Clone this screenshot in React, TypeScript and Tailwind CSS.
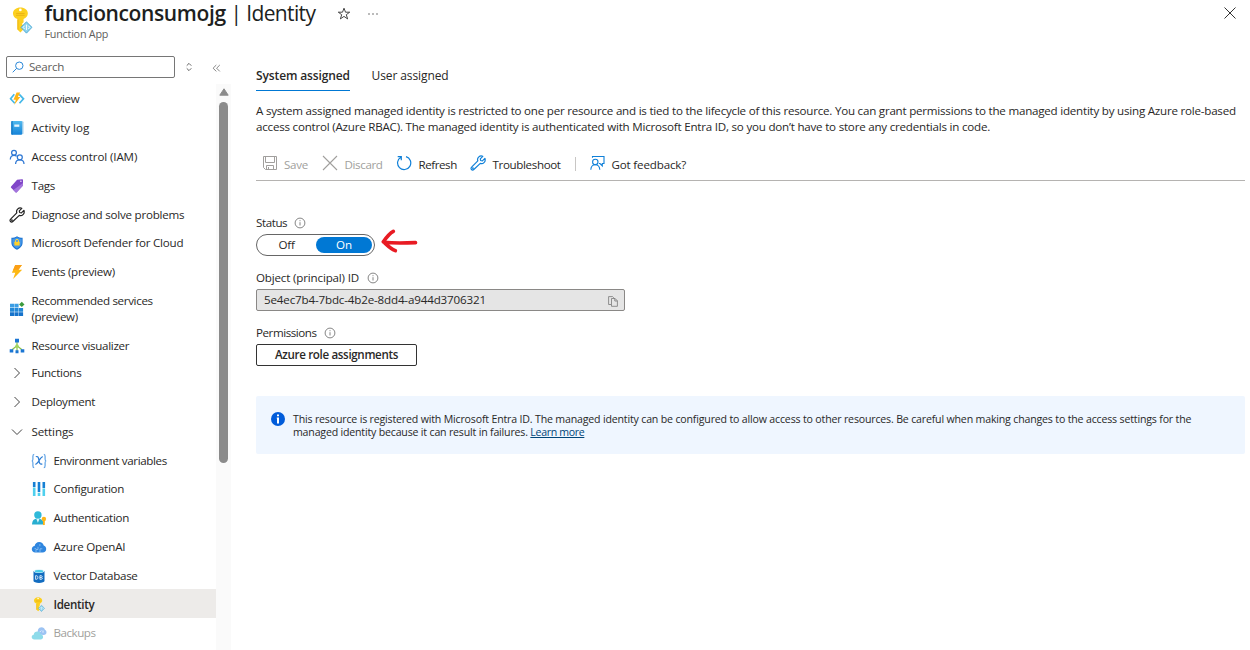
import React from "react";

type SvgProps = { className?: string };

const KeyIcon = ({ className = "" }: SvgProps) => (
  <svg viewBox="0 0 20 26" className={className} fill="none">
    <path d="M8.500.5C4.400.5 1.300 2.900 1.300 6.200c0 2.500 1.700 4.500 4.300 5.400v10l2.900 2.900 3-3-1.600-1.700 1.700-1.700-1.700-1.800 1.600-1.600v-3.200c2.500-.9 4.100-2.900 4.100-5.300C15.600 2.900 12.600.5 8.500.5Z" fill="#fcd020" />
    <path d="M5.600 12h1v10.500l-1-1Z" fill="#efb713" />
    <circle cx="8.400" cy="2.800" r="1.300" fill="#fff" />
    <path d="M4.300 6.200h8.200M4.300 8h8.200" stroke="#eab114" strokeWidth=".9" />
    <path d="m14.300 14.300 5.300 5.300-5.300 5.600L9 19.600Z" fill="#8fd3ee" stroke="#3ea2d0" strokeWidth=".8" />
    <path d="M14.300 17v5.200m-1.800-4.200-1.500 1.600 1.500 1.600m3.600-3.200 1.500 1.600-1.500 1.600" stroke="#fff" strokeWidth=".9" />
  </svg>
);

const OverviewIcon = () => (
  <svg viewBox="0 0 16 16" className="size-4" fill="none">
    <path d="M5.300 3.300 1.600 7.800l4.100 4.500M10.300 3.300l4.200 4.500-4 4.500" stroke="#44b8e8" strokeWidth="1.700" />
    <path d="M7.600 1.500h3.600L8.900 6h2.400l-6.100 8 1.700-5.300H4.400Z" fill="#fdb515" />
  </svg>
);

const LogIcon = () => (
  <svg viewBox="0 0 16 16" className="size-4" fill="none">
    <defs>
      <linearGradient id="log" x1="0" y1="0" x2="0" y2="1"><stop stopColor="#50b9ee" /><stop offset="1" stopColor="#1683d8" /></linearGradient>
    </defs>
    <rect x="3" y="1.200" width="11.500" height="13" rx="1" fill="#a5cfea" />
    <rect x="2.300" y="1" width="10.800" height="13.700" rx="1" fill="url(#log)" />
    <path d="M2.300 1.800a.8.800 0 0 1 .8-.8h.5v13.700h-.5a.8.800 0 0 1-.8-.8Z" fill="#1277c5" />
    <rect x="5.300" y="4.500" width="5" height="2.300" fill="#e8f5fd" />
  </svg>
);

const PeopleIcon = () => (
  <svg viewBox="0 0 16 16" className="size-4" fill="none" stroke="#2f78d4" strokeWidth="1.250">
    <circle cx="5" cy="3.800" r="2.400" />
    <path d="M1.300 10.500c0-2.600 1.500-4.200 3.700-4.200 1.100 0 2 .4 2.700 1" />
    <circle cx="10.800" cy="8.300" r="2.500" />
    <path d="M6.600 14.900c0-2.500 1.700-4.100 4.200-4.100s4.200 1.600 4.200 4.100" />
  </svg>
);

const TagIcon = () => (
  <svg viewBox="0 0 16 16" className="size-4">
    <path d="M8.100 1.800 13 1.300c.6 0 1 .4 1 1v4.600c0 .4-.1.700-.4 1l-5.800 6.300c-.4.400-.9.400-1.300 0L2.100 9.700c-.4-.4-.4-.9 0-1.300Z" fill="#8046c8" />
    <path d="M14 5v1.900c0 .4-.1.700-.4 1l-5.800 6.300c-.4.400-.9.400-1.300 0L4.300 11.900Z" fill="#a374dc" />
    <circle cx="11.900" cy="3.300" r=".8" fill="#ead8fa" />
  </svg>
);

const Wrench = ({ className = "" }: SvgProps) => (
  <svg viewBox="0 0 16 16" className={className} fill="none" stroke="currentColor" strokeWidth="1.200" strokeLinejoin="round">
    <path d="M12.800 1.300 10.300 3.800l.3 1.700 1.800.3 2.500-2.500c.6 1.700.2 3.300-.9 4.300-1 1-2.400 1.200-3.700.8l-6.500 6.100c-.7.700-1.700.7-2.300 0-.7-.7-.6-1.700.1-2.300l6.200-6.400C7.300 4.500 7.600 3.200 8.600 2.200c1.100-1.100 2.700-1.500 4.200-.9Z" />
    <circle cx="2.900" cy="13.300" r=".35" />
  </svg>
);

const ShieldIcon = () => (
  <svg viewBox="0 0 16 16" className="size-4">
    <path d="M8 1.200c1.700 1.300 3.500 1.500 5.600 1.600v4.600c0 3.500-2.500 5.600-5.600 7.300-3.100-1.700-5.600-3.800-5.600-7.300V2.800C4.500 2.700 6.300 2.500 8 1.200Z" fill="#1b73d0" />
    <path d="M8 2.300c1.500 1.100 3 1.400 4.700 1.500v3.700c0 2.800-2 4.600-4.700 6-2.700-1.400-4.700-3.200-4.700-6V3.800C5 3.700 6.500 3.400 8 2.300Z" fill="#4597e8" />
    <path d="M6.500 7V5.900a1.500 1.500 0 0 1 3 0V7" stroke="#ffd83d" strokeWidth="1" fill="none" />
    <rect x="5.400" y="6.700" width="5.200" height="3.900" rx=".5" fill="#ffd029" />
  </svg>
);

const BoltIcon = () => (
  <svg viewBox="0 0 16 16" className="size-4">
    <path d="M6.200 1h6.700L9.500 5.800h3.700L4.100 15l2.200-6.300H2.900Z" fill="#fdb813" />
    <path d="M6.200 1h6.700L9.500 5.800H6.300L4 6.500Z" fill="#fb9f16" />
  </svg>
);

const GridIcon = () => (
  <svg viewBox="0 0 16 16" className="size-4">
    <path fill="#3a9de4" d="M1 2.800h4.100v3.800H1zM5.500 2.800h4.100v3.800H5.500z" />
    <path fill="#2288d8" d="M1 7h4.100v3.800H1zM5.500 7h4.100v3.800H5.500zM10 7h4.100v3.800H10z" />
    <path fill="#1673cb" d="M1 11.200h4.100V15H1zM5.500 11.200h4.100V15H5.500zM10 11.200h4.100V15H10z" />
    <path d="m12.800.8 2.700 2.600-2.700 2.700-2.700-2.700Z" fill="#3c9b3d" />
  </svg>
);

const TreeIcon = () => (
  <svg viewBox="0 0 16 16" className="size-4" fill="none">
    <path d="M8 4v9M8 7.800l-5 4M8 7.800l5 4" stroke="#8bc34a" strokeWidth="1.200" />
    <circle cx="8" cy="8" r="1.700" fill="#a3d65c" />
    <path d="M6 .8h4v3.800H6zM.7 11.200h3.600v3.300H.7zM11.700 11.200h3.600v3.300h-3.600zM6.500 12.300h3v3h-3z" fill="#1b76d3" />
  </svg>
);

const Chevron = ({ open = false }: { open?: boolean }) => (
  <svg viewBox="0 0 16 16" className="size-4" fill="none" stroke="#444" strokeWidth="1">
    <path d={open ? "m3 5.500 5 5 5-5" : "m5.500 3 5 5-5 5"} />
  </svg>
);

const VarIcon = () => (
  <svg viewBox="0 0 16 16" className="size-4" fill="none" stroke="#2b7cd3">
    <path stroke="#5fa3e6" strokeWidth="1.200" d="M3.200 1.300c-1.300 0-1.300.6-1.300 2v3c0 1-.3 1.600-1.100 1.700.8.100 1.100.7 1.100 1.700v3c0 1.400 0 2 1.300 2M12.800 1.300c1.300 0 1.300.6 1.300 2v3c0 1 .3 1.600 1.100 1.700-.8.100-1.100.7-1.100 1.700v3c0 1.400 0 2-1.300 2" />
    <path strokeWidth="1.200" d="M4.800 3.800c2.200-1 2.700.6 3.100 3.600.4 2.900 1.400 4.700 3.400 3.400M11.800 3.900C9.500 3 6.800 12 4.300 11" />
  </svg>
);

const ConfigIcon = () => (
  <svg viewBox="0 0 16 16" className="size-4">
    <path fill="#1680d4" d="M1.900 1h2.600v5H1.900zM6.700 1h2.600v10H6.700zM11.500 1h2.600v6h-2.600z" />
    <path fill="#4fd0ee" d="M1.900 6.500h2.600V15H1.900zM6.700 11.700h2.600V15H6.700zM11.500 7.500h2.600V15h-2.600z" />
  </svg>
);

const UserIcon = () => (
  <svg viewBox="0 0 16 16" className="size-4">
    <path d="M1 14.500c.2-3.700 1.700-6 5.800-6s5.600 2.300 5.900 6Z" fill="#28aed0" />
    <circle cx="6.900" cy="5" r="3.700" fill="#2fb9d9" />
    <path d="m5.300 8.700 1.600 4 1.600-4Z" fill="#d9f5fb" />
    <circle cx="12.900" cy="9" r="2.200" fill="#fdb515" />
    <path d="M12 10h1.800v4.300l-.9.900-.9-.9Z" fill="#fdb515" />
  </svg>
);

const CloudIcon = () => (
  <svg viewBox="0 0 16 16" className="size-4" fill="none">
    <path d="M4.200 13.500C2.200 13.500.8 12.200.8 10.300c0-1.700 1.200-3 2.800-3.200C3.900 4.700 5.800 3 8.200 3c2.300 0 4 1.400 4.500 3.500 1.500.3 2.500 1.700 2.500 3.400 0 2.100-1.500 3.600-3.500 3.600Z" fill="#2f86df" />
    <path d="M5 13v-2.500h2V7.800M9 13V9.800h2.300M8.900 7.200V5M3.500 9.700h1.700" stroke="#9dccf7" strokeWidth=".7" />
  </svg>
);

const DbIcon = () => (
  <svg viewBox="0 0 16 16" className="size-4">
    <path d="M2.500 3v10c0 1 2.500 1.900 5.500 1.900s5.500-.9 5.500-1.900V3Z" fill="#126cc0" />
    <ellipse cx="8" cy="3.100" rx="5.500" ry="2" fill="#e6f6fb" />
    <ellipse cx="8" cy="3.200" rx="4.300" ry="1.300" fill="#45cbe8" />
    <path d="M4.600 7.700v3.600h.6c1.100 0 1.700-.6 1.700-1.800s-.6-1.800-1.700-1.800ZM8.900 7.700v3.600h1.300c1.300 0 1.500-1.500.4-1.800.9-.4.700-1.800-.4-1.800ZM8.900 9.500h1.600" fill="none" stroke="#fff" strokeWidth=".8" />
  </svg>
);

const BackupIcon = () => (
  <svg viewBox="0 0 16 16" className="size-4">
    <path d="M7.300 9.500C5.800 5.300 7.500 2.200 10.500 2.200c1.900 0 3 1 3.400 2.600 1 .4 1.600 1.300 1.600 2.500 0 1.700-1.200 2.800-2.900 2.800Z" fill="#9cc3f3" />
    <path d="M8.500 7.300 10.300 5.500m1.700 0v2.200" stroke="#e3effd" strokeWidth="1" />
    <path d="M3.300 14.400c-1.500 0-2.600-1-2.600-2.400 0-1.200.8-2.100 2-2.300.3-2 1.700-3.200 3.600-3.200s3.200 1.100 3.600 2.900c1.300.1 2.200 1.100 2.200 2.500s-1 2.500-2.500 2.500Z" fill="#8edbea" />
  </svg>
);

const InfoIcon = () => (
  <svg viewBox="0 0 12 12" className="size-3 shrink-0" fill="none" stroke="#666" strokeWidth=".8">
    <circle cx="6" cy="6" r="4.900" />
    <path d="M6 5.200v3.300M6 3.200v1" />
  </svg>
);

type Item = { label: React.ReactNode; icon: React.ReactNode; row: string; text?: string };

const items: Item[] = [
  { label: "Overview", icon: <OverviewIcon />, row: "h-[29px]", text: "tracking-[-0.28px]" },
  { label: "Activity log", icon: <LogIcon />, row: "h-[29px]", text: "tracking-[0px]" },
  { label: "Access control (IAM)", icon: <PeopleIcon />, row: "h-[29px]", text: "tracking-[-0.13px]" },
  { label: "Tags", icon: <TagIcon />, row: "h-[29px]", text: "tracking-[-0.25px]" },
  { label: "Diagnose and solve problems", icon: <Wrench className="size-4 text-[#222]" />, row: "h-[29px]", text: "tracking-[-0.24px]" },
  { label: "Microsoft Defender for Cloud", icon: <ShieldIcon />, row: "h-[28px]", text: "tracking-[-0.22px]" },
  { label: "Events (preview)", icon: <BoltIcon />, row: "h-[29px]", text: "tracking-[-0.29px]" },
  { label: <>Recommended services<br />(preview)</>, icon: <GridIcon />, row: "h-[45px]", text: "tracking-[-0.34px]" },
  { label: "Resource visualizer", icon: <TreeIcon />, row: "h-[29px]", text: "tracking-[-0.3px]" },
  { label: "Functions", icon: <Chevron />, row: "h-[26px]", text: "tracking-[-0.28px]" },
  { label: "Deployment", icon: <Chevron />, row: "h-[31px]", text: "tracking-[-0.26px]" },
  { label: "Settings", icon: <Chevron open />, row: "h-[29px]", text: "tracking-[-0.13px]" },
];

const children: Item[] = [
  { label: "Environment variables", icon: <VarIcon />, row: "h-[29px]", text: "tracking-[-0.36px]" },
  { label: "Configuration", icon: <ConfigIcon />, row: "h-[28px]", text: "tracking-[-0.25px]" },
  { label: "Authentication", icon: <UserIcon />, row: "h-[29px]", text: "tracking-[-0.28px]" },
  { label: "Azure OpenAI", icon: <CloudIcon />, row: "h-[30px]", text: "tracking-[-0.22px]" },
  { label: "Vector Database", icon: <DbIcon />, row: "h-[27px]", text: "tracking-[-0.32px]" },
  { label: "Identity", icon: <KeyIcon className="h-[15px] w-4" />, row: "h-[29px] bg-[#edebe9] pt-[2px]", text: "font-semibold tracking-[-0.32px]" },
  { label: "Backups", icon: <BackupIcon />, row: "h-[30px]", text: "tracking-[-0.48px] text-[#a19f9d]" },
];

const NavRow = ({ item, indent }: { item: Item; indent: string }) => (
  <div className={`flex w-[216px] shrink-0 items-center ${indent} ${item.row}`}>
    <span className="mr-[6.500px] flex w-4 shrink-0 justify-center">{item.icon}</span>
    <span className={`whitespace-nowrap leading-4 ${item.text}`}>{item.label}</span>
  </div>
);

const Header = () => (
  <header className="flex h-[46px] shrink-0 pl-[11px] pr-[13px]">
    <KeyIcon className="mt-[7px] h-[27px] w-[22px] shrink-0" />
    <div className="ml-[11.500px]">
      <div className="flex h-[26px] items-center">
        <h1 className="whitespace-nowrap text-[21px] leading-[26px] text-[#201f1e]">
          <span className="font-semibold tracking-[-0.38px]">funcionconsumojg</span>
          <span className="tracking-[-0.63px]"> | Identity</span>
        </h1>
        <svg viewBox="0 0 14 14" className="ml-[22px] mt-0.5 size-[14px]" fill="none" stroke="#333" strokeWidth=".9">
          <path d="m7 1.200 1.500 4h4.200L9.300 7.700l1.300 4.200L7 9.400l-3.600 2.500 1.300-4.200L1.300 5.200h4.200Z" />
        </svg>
        <svg viewBox="0 0 12 4" className="ml-4 mt-px h-1 w-3" fill="#444">
          <circle cx="2" cy="2" r=".7" /><circle cx="6" cy="2" r=".7" /><circle cx="10" cy="2" r=".7" />
        </svg>
      </div>
      <p className="mt-px text-[10.800px] leading-[14px] tracking-[-0.24px] text-[#605e5c]">Function App</p>
    </div>
    <svg viewBox="0 0 14 14" className="ml-auto mt-[6px] size-[14px]" fill="none" stroke="#333" strokeWidth="1">
      <path d="m1.500 1.500 11 11m0-11-11 11" />
    </svg>
  </header>
);

const Sidebar = () => (
  <aside className="flex w-[231px] shrink-0 flex-col">
    <div className="flex h-[38px] shrink-0 items-start pl-1.5 pt-[10px]">
      <div className="flex h-[22px] w-[169px] items-center rounded-[2px] border border-[#767676] pl-[5px]">
        <svg viewBox="0 0 12 12" className="size-3" fill="none" stroke="#2b88d8" strokeWidth="1">
          <circle cx="7.300" cy="4.700" r="3.700" /><path d="M4.600 7.400.7 11.300" />
        </svg>
        <span className="ml-[5px] tracking-[-0.28px] text-[#605e5c]">Search</span>
      </div>
      <svg viewBox="0 0 8 10" className="ml-[10px] mt-[6px] h-[10px] w-2" fill="none" stroke="#555" strokeWidth=".9">
        <path d="m1.700 3.700 2.300-2.300 2.300 2.300M1.700 6.300 4 8.600l2.300-2.300" />
      </svg>
      <svg viewBox="0 0 10 10" className="ml-[18px] mt-[7px] size-[10px]" fill="none" stroke="#666" strokeWidth=".8">
        <path d="M5.300 2 2.100 5.200 5.300 8.400M8.800 2 5.600 5.200 8.800 8.400" />
      </svg>
    </div>
    <div className="flex min-h-0 flex-1">
      <nav className="flex w-[216px] shrink-0 flex-col">
        {items.map((it, i) => <NavRow key={i} item={it} indent="pl-[9px]" />)}
        {children.map((it, i) => <NavRow key={i} item={it} indent="pl-[31px]" />)}
      </nav>
      <div className="flex w-[15px] flex-col items-center bg-[#fafafa] pt-1">
        <svg viewBox="0 0 10 8" className="h-2 w-[10px]"><path d="M5 .8 9.200 7.200H.8Z" fill="#8b8b8b" stroke="#8b8b8b" strokeLinejoin="round" /></svg>
        <div className="mt-[6px] h-[361px] w-[9px] rounded-full bg-[#8b8b8b]" />
      </div>
    </div>
  </aside>
);

const Toolbar = () => (
  <div className="mt-[12px] flex h-[34px] items-center whitespace-nowrap border-b border-[#b5b3b1] pl-[6px]">
    <svg viewBox="0 0 16 16" className="-mt-px size-4" fill="none" stroke="#a19f9d" strokeWidth="1">
      <path d="M1.500 1.500h13v13h-11l-2-2ZM3.500 1.500v6h9v-6M4.500 14.500v-4h7v4M6.500 12v2.500" />
    </svg>
    <span className="ml-[6px] w-[33px] pt-[2px] tracking-[-0.28px] text-[#a19f9d]">Save</span>
    <svg viewBox="0 0 16 16" className="-mt-px ml-[5px] size-4" fill="none" stroke="#a19f9d" strokeWidth="1.100">
      <path d="m1 1 14 14M15 1 1 15" />
    </svg>
    <span className="ml-[6.500px] w-[46px] pt-[2px] tracking-[-0.38px] text-[#a19f9d]">Discard</span>
    <svg viewBox="0 0 16 16" className="-mt-px ml-[5.500px] size-4" fill="none" stroke="#1080d8" strokeWidth="1.200">
      <path d="M10 1.600A6.600 6.600 0 1 1 4.900 2.200M1.700 1.600h3.600v3.600" />
    </svg>
    <span className="ml-[6.500px] w-[46px] pt-[2px] tracking-[-0.44px]">Refresh</span>
    <Wrench className="-mt-px ml-[5.500px] size-4 text-[#1080d8]" />
    <span className="ml-[6.500px] w-[82.500px] pt-[2px] tracking-[-0.36px]">Troubleshoot</span>
    <span className="h-[14px] w-px bg-[#c8c6c4]" />
    <svg viewBox="0 0 16 16" className="-mt-px ml-[13px] size-4" fill="none" stroke="#1080d8" strokeWidth="1.100">
      <path d="M3.500 2.800V1.500h11.500v7h-1.700v2.300L11 8.500h-1" />
      <circle cx="6.300" cy="6.900" r="2.700" />
      <path d="M1.800 14.800c.2-3 1.900-5 4.500-5s4.300 2 4.500 5" />
    </svg>
    <span className="ml-[6.500px] pt-[2px] tracking-[-0.17px]">Got feedback?</span>
  </div>
);

const Main = () => (
  <main className="flex min-w-0 flex-1 flex-col pl-[25px] pr-[5px] pt-[19px]">
    <div className="flex gap-[21.500px] text-[12px]">
      <div className="h-[26px] w-[94px] whitespace-nowrap border-b border-[#0078d4] font-semibold leading-[22px] tracking-[-0.12px]">System assigned</div>
      <div className="h-[26px] whitespace-nowrap leading-[22px] tracking-[-0.1px]">User assigned</div>
    </div>
    <p className="mt-[12px] whitespace-nowrap leading-4">
      <span className="tracking-[-0.225px]">A system assigned managed identity is restricted to one per resource and is tied to the lifecycle of this resource. You can grant permissions to the managed identity by using Azure role-based</span><br />
      <span className="tracking-[-0.219px]">access control (Azure RBAC). The managed identity is authenticated with Microsoft Entra ID, so you don’t have to store any credentials in code.</span>
    </p>
    <Toolbar />

    <div className="mt-[34px] flex h-4 items-center gap-[7px]"><span className="w-[31px] tracking-[-0.42px]">Status</span><InfoIcon /></div>
    <div className="mt-[3px] flex h-[22px] items-center">
      <div className="flex h-[22px] w-[119px] items-center rounded-full border border-[#666] pr-[2px]">
        <span className="flex-1 text-center tracking-[-0.2px]">Off</span>
        <span className="h-4 w-14 rounded-full bg-[#0078d4] text-center leading-4 text-white">On</span>
      </div>
      <svg viewBox="0 0 38 26" className="-mt-[8px] ml-[6px] h-[26px] w-[38px]" fill="none" stroke="#e81b23" strokeWidth="3.600" strokeLinecap="round" strokeLinejoin="round">
        <path d="M12.300 3.300C9 5 6 8.500 2.300 13.700 6 17 9 20.500 14.300 22.700M3 14.300c9 1 20 .9 31.500.3" />
      </svg>
    </div>

    <div className="mt-[14px] flex h-4 items-center gap-[7.500px]"><span className="w-[103px] whitespace-nowrap tracking-[-0.17px]">Object (principal) ID</span><InfoIcon /></div>
    <div className="mt-[3px] flex h-[22px] w-[369px] items-center justify-between rounded-[2px] border border-[#8a8886] bg-[#e5e5e5] pl-[7px] pr-[6px]">
      <span className="tracking-[-0.16px]">5e4ec7b4-7bdc-4b2e-8dd4-a944d3706321</span>
      <svg viewBox="0 0 10 11" className="mt-0.5 h-[11px] w-[10px]" fill="none" stroke="#777" strokeWidth=".8">
        <path d="M3 8.500H.6V.6h4l1.200 1.200M3.500 2.500h3.600l2.300 2.300v5.500H3.500ZM6.800 2.500V5h2.500" />
      </svg>
    </div>

    <div className="mt-[14px] flex h-4 items-center gap-[6.500px]"><span className="w-[61px] tracking-[-0.44px]">Permissions</span><InfoIcon /></div>
    <button className="mt-[3px] h-[22px] w-[161px] whitespace-nowrap rounded-[2px] border border-[#333] font-semibold leading-5 tracking-[-0.35px]">Azure role assignments</button>

    <div className="mt-[30px] flex h-[58px] rounded-[2px] bg-[#eff6ff] pl-[15px] pt-[15px]">
      <svg viewBox="0 0 14 14" className="mt-px size-[14px] shrink-0">
        <circle cx="7" cy="7" r="7" fill="#015cda" />
        <path d="M6 2.500h2v1.800H6zM5.800 5.500H8v6H6v-4.800h-.2z" fill="#fff" />
      </svg>
      <p className="ml-2 mt-[2px] whitespace-nowrap text-[10.600px] leading-[13px]">
        <span className="tracking-[-0.175px]">This resource is registered with Microsoft Entra ID. The managed identity can be configured to allow access to other resources. Be careful when making changes to the access settings for the</span><br />
        <span className="tracking-[-0.187px]">managed identity because it can result in failures. </span>
        <a className="tracking-[-0.34px] text-[#004578] underline">Learn more</a>
      </p>
    </div>
  </main>
);

export default function App() {
  return (
    <div className="flex h-[650px] w-[1250px] flex-col overflow-hidden bg-white font-['Open_Sans','Noto_Sans',sans-serif] text-[11.6px] leading-4 text-[#292827]">
      <Header />
      <div className="flex min-h-0 flex-1">
        <Sidebar />
        <Main />
      </div>
    </div>
  );
}
